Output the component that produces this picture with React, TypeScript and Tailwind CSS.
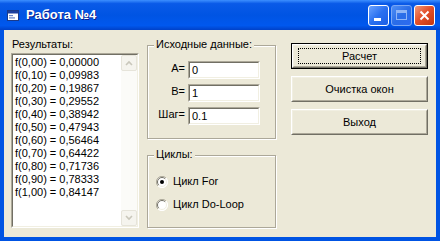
import type { ReactNode } from 'react';

const font = { fontFamily: '"Liberation Sans", Arial, sans-serif' };

const rows = [
  'f(0,00) = 0,00000',
  'f(0,10) = 0,09983',
  'f(0,20) = 0,19867',
  'f(0,30) = 0,29552',
  'f(0,40) = 0,38942',
  'f(0,50) = 0,47943',
  'f(0,60) = 0,56464',
  'f(0,70) = 0,64422',
  'f(0,80) = 0,71736',
  'f(0,90) = 0,78333',
  'f(1,00) = 0,84147',
];

function Sunken({ className, children }: { className: string; children?: ReactNode }) {
  return <div className={`border border-t-[#aca899] border-l-[#aca899] border-b-white border-r-white ${className}`}>
    <div className="h-full w-full border border-t-[#716f64] border-l-[#716f64] border-b-[#f1efe2] border-r-[#f1efe2] bg-white">
      {children}
    </div>
  </div>;
}

function Group({ title, className, children }: { title: string; className: string; children?: ReactNode }) {
  return <div className={`relative border border-[#aca899] shadow-[inset_1px_1px_white,1px_1px_white] ${className}`}>
    <span className="absolute -top-[8px] left-[6px] bg-[#ece9d8] px-[2px] leading-[13px]">{title}</span>
    {children}
  </div>;
}

function Field({ label, value }: { label: string; value: string }) {
  return <div className="flex items-center">
    <span className="w-[40px] pr-[3px] text-right leading-[13px] -mt-[3px]">{label}</span>
    <Sunken className="h-[18px] w-[72px]">
      <div className="pl-[2px] pt-[1px] leading-[13px]">{value}</div>
    </Sunken>
  </div>;
}

function Radio({ checked, label }: { checked?: boolean; label: string }) {
  return <div className="flex items-center gap-[5px]">
    <svg width="12" height="12" viewBox="0 0 12 12">
      <circle cx="6" cy="6" r="5.5" fill="#fff" />
      <path d="M10 2 A5.5 5.5 0 0 0 2 10" fill="none" stroke="#aca899" strokeWidth="1" />
      <path d="M9.2 2.8 A4.5 4.5 0 0 0 2.8 9.2" fill="none" stroke="#716f64" strokeWidth="1" />
      <path d="M2 10 A5.5 5.5 0 0 0 10 2" fill="none" stroke="#fff" strokeWidth="1" />
      <path d="M2.8 9.2 A4.5 4.5 0 0 0 9.2 2.8" fill="none" stroke="#f1efe2" strokeWidth="1" />
      {checked && <circle cx="6" cy="6" r="2" fill="#000" />}
    </svg>
    <span className="leading-[13px]">{label}</span>
  </div>;
}

function Button({ label, def }: { label: string; def?: boolean }) {
  return <div className={`h-[26px] w-[137px] ${def ? 'border border-black' : ''}`}>
    <div className="h-full w-full border border-t-white border-l-white border-b-[#716f64] border-r-[#716f64]">
      <div className="flex h-full w-full items-center justify-center border border-t-[#f1efe2] border-l-[#f1efe2] border-b-[#aca899] border-r-[#aca899] bg-[#ece9d8]">
        <div className={`flex h-[16px] items-center justify-center ${def ? 'w-[123px] border border-dotted border-black' : ''}`}>
          <span className="leading-[13px]">{label}</span>
        </div>
      </div>
    </div>
  </div>;
}

function ScrollArrow({ up }: { up?: boolean }) {
  return <div className="flex h-[16px] w-[16px] items-center justify-center rounded-[2px] border border-[#e6e4da] bg-[#f5f4ee]">
    <svg width="8" height="6" viewBox="0 0 8 6">
      <path d={up ? 'M1 5 L4 2 L7 5' : 'M1 1 L4 4 L7 1'} fill="none" stroke="#c9c7bb" strokeWidth="1.6" />
    </svg>
  </div>;
}

function TitleButton({ kind }: { kind: 'min' | 'max' | 'close' }) {
  if (kind === 'close') {
    return <div className="flex h-[21px] w-[21px] items-center justify-center rounded-[3px] border border-white bg-[linear-gradient(135deg,#f09a7c,#e4512c_45%,#c2350f)]">
      <svg width="11" height="11" viewBox="0 0 11 11">
        <path d="M1.5 1.5 L9.5 9.5 M9.5 1.5 L1.5 9.5" stroke="#fff" strokeWidth="2" />
      </svg>
    </div>;
  }
  const faded = kind === 'max';
  return <div className={`flex h-[21px] w-[21px] items-center justify-center rounded-[3px] border ${faded ? 'border-[#7aa7f5] bg-[linear-gradient(135deg,#4f8ff5,#2a6de8_50%,#2d6af0)]' : 'border-white bg-[linear-gradient(135deg,#6aa3ff,#2a70f0_50%,#1c5fe6)]'}`}>
    {kind === 'min'
      ? <div className="mt-[9px] -ml-[3px] h-[3px] w-[7px] bg-white" />
      : <div className="h-[10px] w-[11px] border border-t-[3px] border-[#8fb5f7]" />}
  </div>;
}

export default function App() {
  return <div className="flex h-[241px] w-[440px] flex-col text-[11px] text-black" style={font}>
    <div className="flex h-[30px] items-center bg-[linear-gradient(180deg,#3d8fff_0%,#0a5ae8_12%,#0054e3_50%,#0058ee_85%,#0041c8_100%)] pl-[7px] pr-[5px]">
      <svg width="12" height="11" viewBox="0 0 12 11" className="mt-[1px]">
        <rect x="0.5" y="0.5" width="11" height="10" fill="#fff" stroke="#1a3a8a" />
        <rect x="1" y="1" width="10" height="2.5" fill="#1c3f9e" />
        <rect x="2" y="5" width="4" height="1.2" fill="#6b86c8" />
        <rect x="2" y="7.3" width="6" height="1.2" fill="#6b86c8" />
      </svg>
      <span className="ml-[7px] text-[13px] font-bold text-white [text-shadow:1px_1px_#0f1f8a]">Работа №4</span>
      <div className="ml-auto flex gap-[2px]">
        <TitleButton kind="min" />
        <TitleButton kind="max" />
        <TitleButton kind="close" />
      </div>
    </div>
    <div className="flex flex-1 border-x-4 border-b-4 border-[#0054e3] bg-[#ece9d8] pt-[8px]">
      <div className="ml-[7px] flex w-[128px] flex-col">
        <span className="ml-[1px] leading-[13px]">Результаты:</span>
        <Sunken className="mt-[2px] h-[175px] w-[128px]">
          <div className="flex h-full">
            <div className="flex-1 pl-[2px] pt-[1px]">
              {rows.map((r) => <div key={r} className="leading-[13px]">{r}</div>)}
            </div>
            <div className="flex w-[16px] flex-col justify-between bg-[#fbfbf8]">
              <ScrollArrow up />
              <ScrollArrow />
            </div>
          </div>
        </Sunken>
      </div>
      <div className="ml-[8px] flex w-[129px] flex-col pt-[7px]">
        <Group title="Исходные данные:" className="h-[94px]">
          <div className="flex flex-col gap-[5px] pt-[15px]">
            <Field label="A=" value="0" />
            <Field label="B=" value="1" />
            <Field label="Шаг=" value="0.1" />
          </div>
        </Group>
        <Group title="Циклы:" className="mt-[16px] h-[73px]">
          <div className="flex flex-col gap-[10px] pl-[8px] pt-[19px]">
            <Radio checked label="Цикл For" />
            <Radio label="Цикл Do-Loop" />
          </div>
        </Group>
      </div>
      <div className="ml-[15px] flex flex-col gap-[7px] pt-[5px]">
        <Button def label="Расчет" />
        <Button label="Очистка окон" />
        <Button label="Выход" />
      </div>
    </div>
  </div>;
}
